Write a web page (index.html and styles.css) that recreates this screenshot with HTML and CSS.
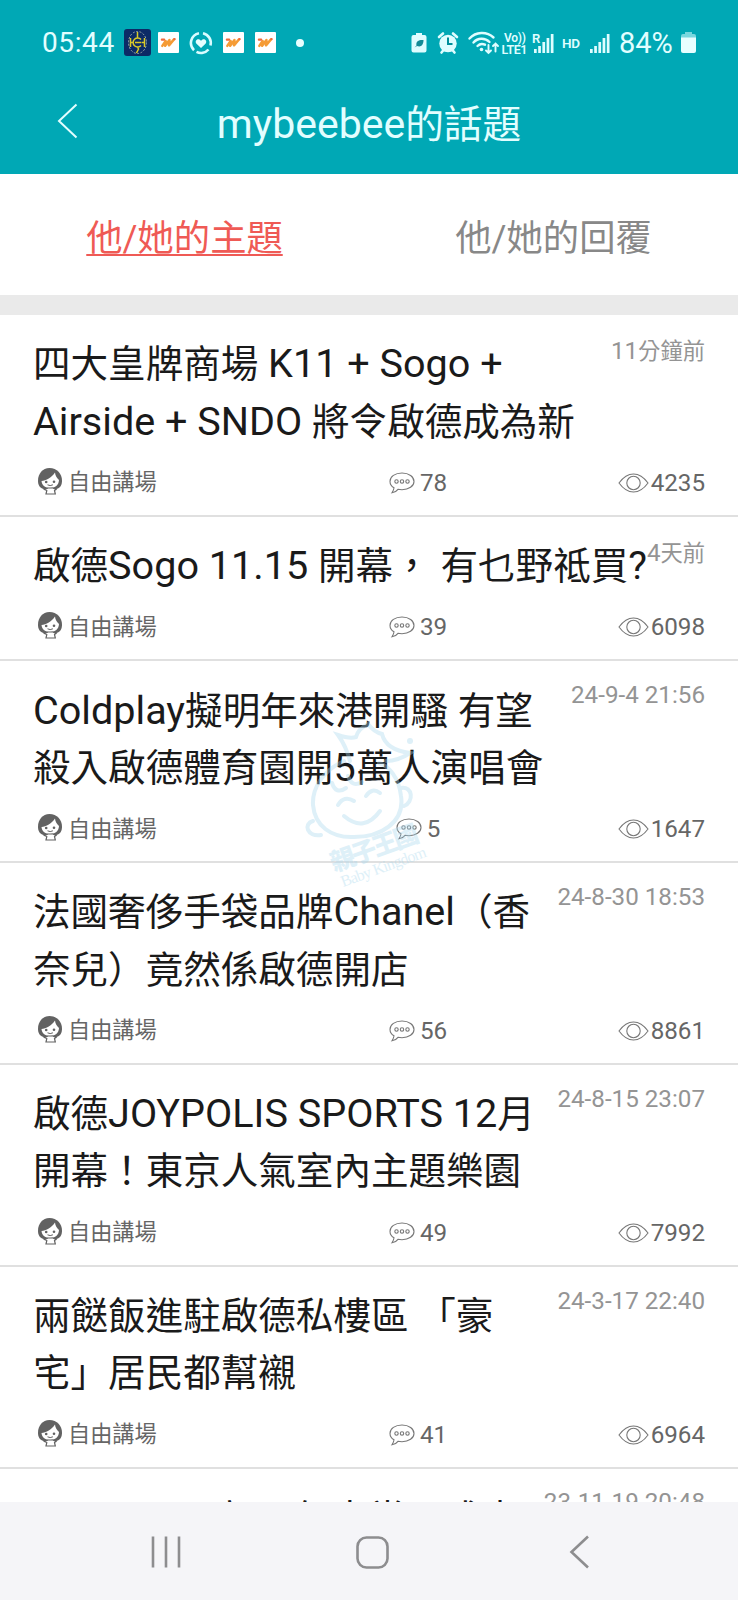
FILE: index.html
```html
<!DOCTYPE html>
<html lang="zh-Hant">
<head>
<meta charset="utf-8">
<title>mybeebee的話題</title>
<link rel="stylesheet" href="styles.css">
</head>
<body>
<svg class="defs" width="0" height="0">
  <symbol id="girl" viewBox="0 0 26 28">
    <path fill="#626262" d="M12.500 1C5.500 1 1 7 1 13.500c0 4 1.500 7.500 5.500 8.500l3 .5h7l3-.5c4-1 5.500-4.500 5.500-8.500C25 7 20 1 12.500 1z"/>
    <path fill="#fff" d="M4.500 14c4.500-.5 10.500-3.500 13.500-8.500.2 3 2 6 4 7.500-.2 5.300-4 8-8.700 8-4.700 0-8.500-2.500-8.800-7z"/>
    <path fill="#fff" stroke="#626262" stroke-width="1.200" d="M7.500 22.500l3.500-1.500h5l3 1.500-1.500 1 .8 3.500H9l.8-3.500z"/>
    <circle cx="9.200" cy="15" r="1.300" fill="#626262"/><circle cx="17" cy="14.800" r="1.300" fill="#626262"/>
    <path d="M10.500 17.800q2.700 1.600 5.400 0" fill="none" stroke="#626262"/>
  </symbol>
  <symbol id="bubble" viewBox="0 0 26 22">
    <path d="M13 1C6 1 1 4.600 1 9.400c0 2.600 1.500 4.900 4 6.400-.2 2-1 3.600-2 5 2.600-.4 4.600-1.600 6-3.500 1.300.3 2.600.4 4 .4 6.800 0 12-3.600 12-8.300S20 1 13 1z"/>
    <circle cx="7.500" cy="9.500" r="1.700"/><circle cx="13" cy="9.500" r="1.700"/><circle cx="18.500" cy="9.500" r="1.700"/>
  </symbol>
  <symbol id="eye" viewBox="0 0 31 20">
    <path d="M1 10C5 4.500 9 1 15.500 1S26 4.500 30 10c-4 5.500-8 9-14.500 9S5 15.500 1 10z"/>
    <circle cx="15.500" cy="10" r="6.700"/>
  </symbol>
  <symbol id="wave" viewBox="0 0 22 22">
    <rect width="22" height="22" rx="1" fill="#fff"/>
    <path d="M4.500 14.500l3.500-5-.5 5L12 8.500l-.5 5.500 5-6" fill="none" stroke="#f59b35" stroke-width="2.600" stroke-linecap="round" stroke-linejoin="round"/>
    <path d="M4 8h2.500M17 7.500h.5" stroke="#ee6b3d" stroke-width="2.200" stroke-linecap="round"/>
  </symbol>
</svg>
<div class="screen">
  <header class="top">
    <div class="status">
      <span class="clock">05:44</span>
      <svg class="app-icon" width="27" height="27" viewBox="0 0 27 27"><rect width="27" height="27" rx="3" fill="#0c2a66"/><ellipse cx="13.500" cy="13.500" rx="9" ry="11" fill="none" stroke="#9aa8a8" stroke-dasharray="2 1.500"/><path d="M6.500 9v9M6.500 13.500h3M20.500 9v9M17.500 13.500h3M17 10.500a4.500 4.500 0 1 0 0 6M11 13.500h6M13.500 3v6M13.500 18l1 2-2 4" fill="none" stroke="#d9c928" stroke-width="1.500"/></svg>
      <svg class="w1" width="21" height="21"><use href="#wave"/></svg>
      <svg class="ring" width="24" height="24" viewBox="0 0 24 24"><g fill="none" stroke="#d9fcff" stroke-width="2.600"><path d="M10 2.200A10 10 0 0 0 5 19.200"/><path d="M14 2.200A10 10 0 0 1 21.500 14.500"/><path d="M7.500 20.900A10 10 0 0 0 19.500 18.500"/></g><path fill="#e6feff" d="M12 17l-4.500-4.300c-2-2.200.2-5.500 3-4.200L12 9.700l1.500-1.200c2.800-1.300 5 2 3 4.200z"/></svg>
      <svg class="w2" width="21" height="21"><use href="#wave"/></svg>
      <svg class="w3" width="21" height="21"><use href="#wave"/></svg>
      <i class="dot"></i>
      <svg class="sys" width="200" height="28" viewBox="0 0 200 28">
        <g fill="#dffdff">
          <path d="M6 6V4h6v2h2.500q2 0 2 2v13.500q0 2-2 2h-11q-2 0-2-2V8q0-2 2-2z"/>
          <circle cx="38" cy="14.500" r="8.700"/>
          <path d="M29 8l4-3.500M47 8l-4-3.500M31.500 23.500l2.500-3M44.500 23.500l-2.500-3" stroke="#dffdff" stroke-width="2.600" stroke-linecap="round"/>
          <circle cx="71.500" cy="20.500" r="1.800"/>
          <path d="M124 20h2.700v4H124zM128.200 17h2.700v7h-2.700zM132.400 13h2.700v11h-2.700zM136.600 9h2.700v15h-2.700zM140.800 5h2.700v19h-2.700zM180 20h2.700v4H180zM184.200 17h2.700v7h-2.700zM188.400 13h2.700v11h-2.700zM192.600 9h2.700v15h-2.700zM196.800 5h2.700v19h-2.700z"/>
        </g>
        <path d="M4.500 18.500l2-2c-1-4.500 3-6 7-5.500 0 5-2.500 7.500-6.500 6" fill="#138b96"/>
        <path d="M38 8.500V15h4.500" fill="none" stroke="#008f9b" stroke-width="2"/>
        <g fill="none" stroke="#dffdff" stroke-width="2.400" stroke-linecap="round"><path d="M59.500 9.500a17 17 0 0 1 24-1M63.500 13.500a11 11 0 0 1 16-.5M67.500 17a6.500 6.500 0 0 1 7.500-1.300"/><path stroke-width="1.900" d="M78.500 16v8m-2.500-2.500l2.500 2.500 2.500-2.500M85.500 22.500v-8m-2.500 2.500l2.500-2.500 2.500 2.500"/></g>
        <g class="sys-text"><text x="94" y="13" font-size="12" textLength="22">Vo))</text><text x="91.500" y="25" font-size="12.500" textLength="26">LTE1</text><text x="122" y="13.500" font-size="13">R</text><text x="152" y="19" font-size="13.500" textLength="18">HD</text></g>
      </svg>
      <span class="pct">84%</span>
      <svg class="batt" width="15" height="22" viewBox="0 0 15 22"><path fill="#79d7de" d="M4 2V0h7v2h2q2 0 2 2v3H0V4q0-2 2-2z"/><path fill="#e8feff" d="M0 5.500h15V19q0 2-2 2H2q-2 0-2-2z"/></svg>
    </div>
    <div class="bar">
      <svg class="back" width="22" height="36" viewBox="0 0 22 36"><path d="M19.500 1.500L2 18l17.500 16.500" fill="none" stroke="#e2feff" stroke-width="2"/></svg>
      <h1>mybeebee<span>的話題</span></h1>
    </div>
  </header>
  <nav class="tabs"><a class="on">他/她的主題</a><a>他/她的回覆</a></nav>
  <main class="list">
    <article class="item">
      <div class="head"><h2>四大皇牌商場<b> K11 + Sogo +</b><br><b>Airside + SNDO </b>將令啟德成為新</h2><time class="rel">11<span>分鐘前</span></time></div>
      <div class="meta"><span class="forum"><svg><use href="#girl"/></svg>自由講場</span><span class="replies"><svg><use href="#bubble"/></svg>78</span><span class="views"><svg><use href="#eye"/></svg>4235</span></div>
    </article>
    <article class="item">
      <div class="head"><h2>啟德<b>Sogo 11.15 </b>開幕，<b> </b>有乜野祗買<b>?</b></h2><time class="rel">4<span>天前</span></time></div>
      <div class="meta"><span class="forum"><svg><use href="#girl"/></svg>自由講場</span><span class="replies"><svg><use href="#bubble"/></svg>39</span><span class="views"><svg><use href="#eye"/></svg>6098</span></div>
    </article>
    <article class="item">
      <div class="head"><h2><b>Coldplay</b>擬明年來港開騷<b> </b>有望<br>殺入啟德體育園開<b>5</b>萬人演唱會</h2><time>24-9-4 21:56</time></div>
      <div class="meta"><span class="forum"><svg><use href="#girl"/></svg>自由講場</span><span class="replies"><svg><use href="#bubble"/></svg>5</span><span class="views"><svg><use href="#eye"/></svg>1647</span></div>
    </article>
    <article class="item">
      <div class="head"><h2>法國奢侈手袋品牌<b>Chanel</b>（香<br>奈兒）竟然係啟德開店</h2><time>24-8-30 18:53</time></div>
      <div class="meta"><span class="forum"><svg><use href="#girl"/></svg>自由講場</span><span class="replies"><svg><use href="#bubble"/></svg>56</span><span class="views"><svg><use href="#eye"/></svg>8861</span></div>
    </article>
    <article class="item">
      <div class="head"><h2>啟德<b>JOYPOLIS SPORTS 12</b>月<br>開幕！東京人氣室內主題樂園</h2><time>24-8-15 23:07</time></div>
      <div class="meta"><span class="forum"><svg><use href="#girl"/></svg>自由講場</span><span class="replies"><svg><use href="#bubble"/></svg>49</span><span class="views"><svg><use href="#eye"/></svg>7992</span></div>
    </article>
    <article class="item">
      <div class="head"><h2>兩餸飯進駐啟德私樓區<b> </b>「豪<br>宅」居民都幫襯</h2><time>24-3-17 22:40</time></div>
      <div class="meta"><span class="forum"><svg><use href="#girl"/></svg>自由講場</span><span class="replies"><svg><use href="#bubble"/></svg>41</span><span class="views"><svg><use href="#eye"/></svg>6964</span></div>
    </article>
    <article class="item last">
      <div class="head"><h2><b>AIRSIDE X</b>高<b>17</b>年大常，成本</h2><time>23-11-19 20:48</time></div>
    </article>
  </main>
  <footer class="nav">
    <svg width="738" height="98" viewBox="0 0 738 98"><g fill="none" stroke="#8d8d8f" stroke-width="2.600"><path d="M153 34.500v31M166 34.500v31M179 34.500v31"/><rect x="357.500" y="35.500" width="30" height="30" rx="9"/><path d="M588 34.500L571.500 50 588 65.500"/></g></svg>
  </footer>
  <svg class="mark" width="140" height="175" viewBox="0 0 140 175">
    <g fill="none" stroke="#a9d8ee" stroke-width="4" stroke-linecap="round">
      <path d="M50 40Q46 25 38 14q12 4 18 2Q58 8 68 3q6 8 14 10 4 16 28 19-12 8-24 8"/>
      <path d="M44 40C22 50 12 68 13 84c2 22 19 32 38 32 30 1 54-15 50-41-2-18-12-30-22-33"/>
      <path d="M13 100c-10 3-6 16 8 14M101 67c12-2 13 14 3 18M38 84q6-10 16-4M66 75q6-9 14-3M44 95q20 17 36-5M32 62q4 12 14 5M48 55q4 12 14 6"/>
    </g>
    <circle cx="110" cy="20" r="3" fill="#a9d8ee"/>
    <g class="mark-text" transform="rotate(-20 45 160)"><text x="38" y="148" font-size="25" font-weight="900" textLength="92">親子王國</text><text x="41" y="165" font-size="16" class="latin" textLength="90">Baby Kingdom</text></g>
  </svg>
</div>
</body>
</html>
```
FILE: styles.css
```css
* { box-sizing: border-box; }
body { margin: 0; background: #fff; font-family: Roboto, "Noto Sans CJK TC", sans-serif; }
.defs { position: absolute; }
.screen { position: relative; width: 738px; height: 1600px; overflow: hidden; display: flex; flex-direction: column; }
.top { height: 174px; flex: none; background: #00a8b5; color: #e2feff; }
.status { height: 85px; padding: 0 42px 0 42px; display: flex; align-items: center; }
.clock, .pct { font-size: 28px; line-height: 40px; }
.clock { width: 82px; letter-spacing: .6px; }
.w1 { margin-left: 7px; }
.ring { margin-left: 10px; }
.w2 { margin-left: 10px; }
.w3 { margin-left: 11px; }
.dot { width: 8px; height: 8px; border-radius: 50%; background: #e8feff; margin-left: 20px; }
.sys { margin-left: 106px; flex: none; }
.sys-text { fill: #dffdff; font-weight: 600; }
.pct { margin-left: 9px; width: 58px; font-size: 29px; }
.batt { margin-left: 4px; }
.bar { height: 89px; display: flex; align-items: center; position: relative; justify-content: center; }
.back { position: absolute; left: 57px; top: 18px; }
h1 { margin: -12px 0 0; font-size: 41px; font-weight: 400; line-height: 60px; }
h1 span { font-size: 38.700px; line-height: 1; }
.tabs { height: 141px; flex: none; display: grid; grid-template-columns: 1fr 1fr; text-align: center; font-size: 36.300px; line-height: 130px; color: #888; border-bottom: 20px solid #eaeaea; }
.tabs .on { color: #ef5a55; text-decoration: underline; text-decoration-thickness: 2px; text-underline-offset: 3px; }
.list { flex: 1; min-height: 0; overflow: hidden; }
.item { padding: 21.300px 33px 0; border-bottom: 2px solid #e0e0e0; }
.head { display: flex; justify-content: space-between; align-items: flex-start; }
h2 { margin: 0; font-size: 37.550px; font-weight: 400; line-height: 57.250px; color: #1a1a1a; white-space: pre; }
h2 b { font-size: 39.600px; font-weight: 400; line-height: 1; }
time { margin-top: -4.500px; font-size: 24.200px; line-height: 34px; color: #949494; white-space: pre; }
time.rel { margin-top: -2px; }
time span { font-size: 22.300px; line-height: 1; }
.last h2 { padding-top: 1px; }
.meta { height: 64px; padding-top: 1px; display: grid; grid-template-columns: 335px 100px 1fr; font-size: 24.200px; color: #666; }
.meta span { display: flex; align-items: center; height: 62px; }
.forum { font-size: 22.200px; line-height: 58px; padding-bottom: 1px; }
.forum svg { width: 26px; height: 28px; margin: 0 5px 3px 4px; }
.replies { justify-content: center; }
.replies svg { width: 26px; height: 22px; margin-right: 5px; fill: none; stroke: #777; stroke-width: 1.100; }
.views { justify-content: flex-end; }
.views svg { width: 31px; height: 20px; margin-right: 2px; fill: none; stroke: #777; stroke-width: 1.100; }
.nav { height: 98px; flex: none; background: #f5f5f8; }
.mark { position: absolute; left: 300px; top: 721px; opacity: .38; }
.mark-text { fill: #a9d8ee; }
.mark-text .latin { font-family: "Liberation Serif", serif; }
```
